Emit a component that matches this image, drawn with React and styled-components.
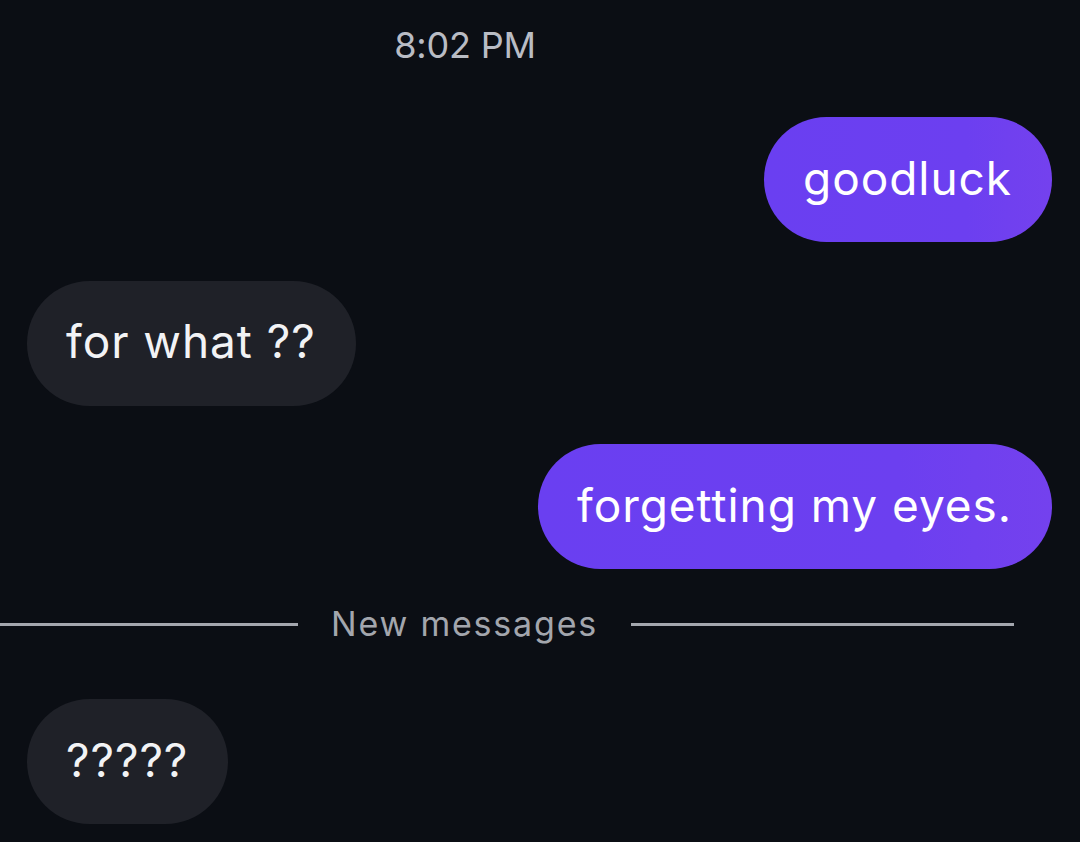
import React from "react";
import styled, { createGlobalStyle } from "styled-components";

const Global = createGlobalStyle`
  html, body { margin: 0; padding: 0; background: #0b0e14; }
  body { font-family: Inter, "Noto Sans", sans-serif; -webkit-font-smoothing: antialiased; }
`;

const Page = styled.div`
  width: 1080px;
  height: 842px;
  overflow: hidden;
  background: #0b0e14;
  display: flex;
  flex-direction: column;
`;

const Timestamp = styled.div`
  color: #b9bcc4;
  font-size: 36px;
  line-height: 46px;
  text-align: center;
  padding: 22px 150px 0 0;
  letter-spacing: -0.2px;
`;

const Thread = styled.div`
  display: flex;
  flex-direction: column;
  gap: 38.5px;
  padding: 49px 28px 0 27px;
`;

const Row = styled.div`
  display: flex;
  justify-content: ${(p) => (p.$out ? "flex-end" : "flex-start")};
`;

const Bubble = styled.div`
  height: 125px;
  box-sizing: border-box;
  display: flex;
  align-items: center;
  padding: 0 40px 4px 39px;
  border-radius: 63px;
  font-size: 46px;
  letter-spacing: 0.95px;
  color: ${(p) => (p.$out ? "#ffffff" : "#f2f3f5")};
  background: ${(p) =>
    p.$out ? "linear-gradient(90deg, #6a3ff1 0%, #6c3ff0 70%, #7441ee 100%)" : "#1f2128"};
`;

const Divider = styled.div`
  display: flex;
  align-items: center;
  gap: 33px;
  margin: -3px 38px 16px -27px;
  height: 40px;
`;

const Line = styled.div`
  flex: ${(p) => (p.$width ? `0 0 ${p.$width}px` : "1")};
  height: 3px;
  background: #a4a7ae;
`;

const Label = styled.span`
  color: #a3a6ad;
  font-size: 34px;
  line-height: 40px;
  letter-spacing: 1.8px;
  padding-bottom: 2px;
`;

const messages = [
  { out: true, text: "goodluck" },
  { out: false, text: "for what ??" },
  { out: true, text: "forgetting my eyes." },
  { divider: "New messages" },
  { out: false, text: "?????" },
];

export default function App() {
  return (
    <Page>
      <Global />
      <Timestamp>8:02 PM</Timestamp>
      <Thread>
        {messages.map((m, i) =>
          m.divider ? (
            <Divider key={i}>
              <Line $width={298} />
              <Label>{m.divider}</Label>
              <Line />
            </Divider>
          ) : (
            <Row key={i} $out={m.out}>
              <Bubble $out={m.out}>{m.text}</Bubble>
            </Row>
          )
        )}
      </Thread>
    </Page>
  );
}
